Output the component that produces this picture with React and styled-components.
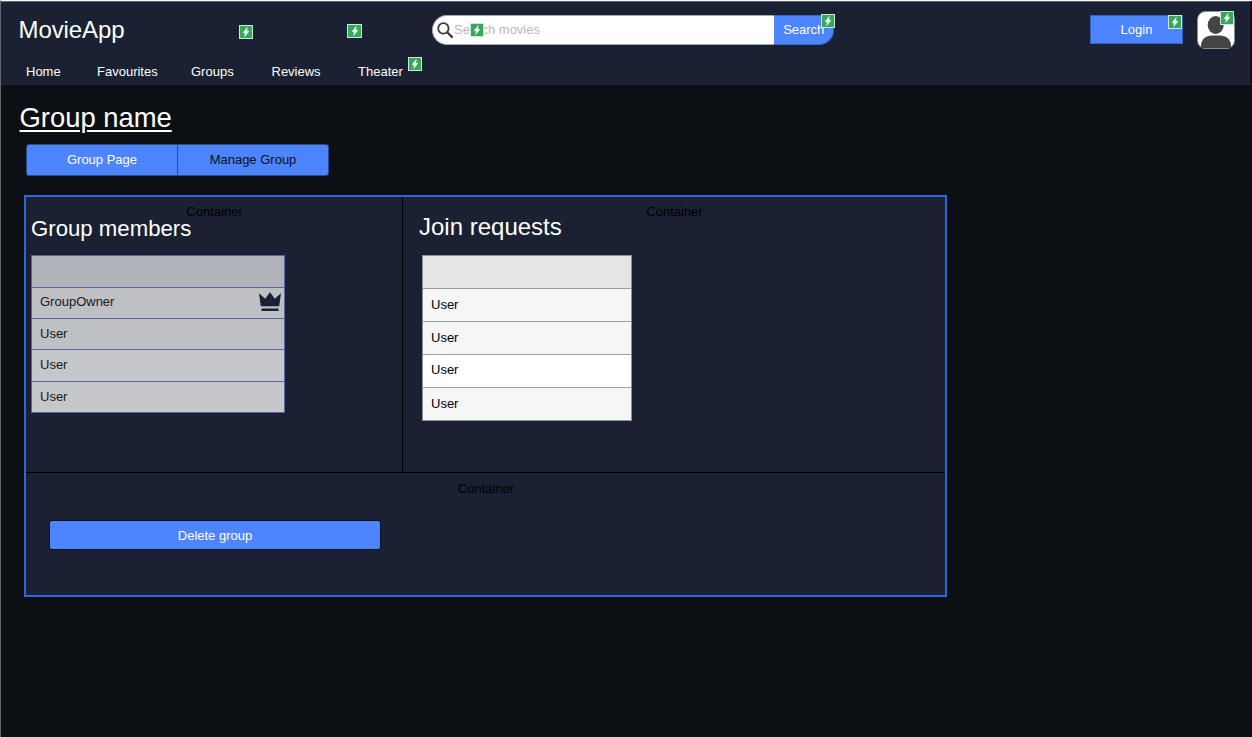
import React from "react";
import styled, { createGlobalStyle } from "styled-components";

const Global = createGlobalStyle`
  *, *::before, *::after { box-sizing: border-box; }
  html, body { margin: 0; background: #0c0f13; }
  body { font-family: "Liberation Sans", Arial, sans-serif; font-size: 13px; line-height: 15px; color: #fff; overflow: hidden; }
  button { font: inherit; padding: 0; margin: 0; }
  h1, h2, p { margin: 0; font-weight: 400; }
`;

const Page = styled.div`
  height: 737px;
  border-top: 1px solid #f4f6f7;
  border-left: 1px solid #63676b;
`;

const Header = styled.header`
  width: 1249px;
  height: 84px;
  border-top: 1px solid #626a76;
  background: #192132;
`;

const TopBar = styled.div`
  display: flex;
  align-items: flex-start;
  height: 60px;
`;

const Brand = styled.div`
  width: 431px;
  padding: 14px 0 0 17.5px;
  font-size: 24px;
  line-height: 28px;
  letter-spacing: -0.1px;
  position: relative;
`;

const BadgeBox = styled.span`
  position: absolute;
  left: ${(p) => p.$x}px;
  top: ${(p) => p.$y}px;
  width: ${(p) => p.$w || 14}px;
  height: ${(p) => p.$h || 14}px;
  border: 1px solid rgba(255, 255, 255, 0.75);
  background: #35a85a;
  display: flex;
  align-items: center;
  justify-content: center;
`;

const Badge = ({ x, y, w, h }) => (
  <BadgeBox $x={x} $y={y} $w={w} $h={h}>
    <svg width="8" height="10" viewBox="0 0 8 10">
      <path d="M5.2 0.4 1 5.8H3.2L2.7 9.6 7 4.2H4.8Z" fill="#fff" stroke="#fff" strokeWidth=".4" />
    </svg>
  </BadgeBox>
);

const SearchForm = styled.div`
  position: relative;
  display: flex;
  width: 402px;
  height: 29.5px;
  margin-top: 13px;
`;

const SearchField = styled.div`
  display: flex;
  align-items: center;
  width: 341.5px;
  border: 1px solid #a9abae;
  border-right: 0;
  border-radius: 15px 0 0 15px;
  background: #fff;
  color: #b9b9b9;
  padding: 0 0 0.5px 4px;
  svg { margin: 1px 0 0; }
`;

const SearchButton = styled.button`
  width: 60.5px;
  padding: 0 0 0.5px 1px;
  border: 1px solid #3b68c6;
  border-left: 0;
  border-radius: 0 15px 15px 0;
  background: #4d84ff;
  color: #fff;
`;

const LoginButton = styled.button`
  position: relative;
  width: 93px;
  height: 29px;
  margin: 13px 0 0 256px;
  border: 1px solid #3560b8;
  background: #4d84ff;
  color: #fff;
`;

const Avatar = styled.div`
  position: relative;
  width: 38px;
  height: 38px;
  margin: 9px 0 0 14px;
  svg { display: block; }
`;

const Nav = styled.nav`
  position: relative;
  display: flex;
  padding: 2px 0 0 25px;
`;

const NavItem = styled.a`
  width: ${(p) => p.$w}px;
`;

const Title = styled.h1`
  margin: 17px 0 0 18.5px;
  font-size: 27.4px;
  line-height: 32px;
  text-decoration: underline;
  text-decoration-thickness: 2px;
  text-underline-offset: 3px;
`;

const Tabs = styled.div`
  display: flex;
  width: 303px;
  height: 32px;
  margin: 9.5px 0 0 25px;
  border: 1px solid #2b4988;
  border-radius: 3px;
  background: #4d84ff;
  overflow: hidden;
`;

const Tab = styled.button`
  flex: 1;
  border: 0;
  background: none;
  color: ${(p) => (p.$active ? "#fff" : "#0c0f13")};
  & + & { border-left: 1px solid #2f4b87; }
`;

const Panel = styled.main`
  width: 923px;
  height: 402px;
  margin: 19.5px 0 0 23px;
  border: 2px solid #2b66dc;
  background: #192132;
`;

const Columns = styled.div`
  display: grid;
  grid-template-columns: 377px 1fr;
  height: 276px;
  border-bottom: 1px solid #000;
`;

const Column = styled.section`
  padding-left: ${(p) => p.$inset}px;
  position: relative;
  border-right: ${(p) => (p.$divided ? "1px solid #000" : "0")};
`;

const Footer = styled.section`
  position: relative;
  padding: 47px 0 0 23px;
`;

const Caption = styled.p`
  position: absolute;
  left: 1px;
  right: 0;
  top: ${(p) => p.$top || 7}px;
  text-align: center;
  color: #000;
`;

const Heading = styled.h2`
  position: relative;
  margin-left: ${(p) => p.$shift || 0}px;
  padding-top: ${(p) => p.$top}px;
  font-size: ${(p) => p.$size}px;
  line-height: 26px;
`;

const Table = styled.ul`
  list-style: none;
  margin: ${(p) => p.$gap}px 0 0;
  padding: 0;
  width: ${(p) => p.$w}px;
  border: 1px solid ${(p) => p.$line};
  color: ${(p) => p.$ink};
`;

const Row = styled.li`
  display: flex;
  align-items: center;
  justify-content: space-between;
  height: ${(p) => p.$h}px;
  padding: 0 3px ${(p) => p.$lift || 0}px 8px;
  background: ${(p) => p.$bg};
  border-top: 1px solid ${(p) => p.$line};
  &:first-child { border-top: 0; }
`;

const DeleteButton = styled.button`
  display: block;
  width: 332px;
  height: 30px;
  border: 1px solid #0c1222;
  border-radius: 3px;
  background: #4d84ff;
  color: #fff;
`;

const Crown = () => (
  <svg width="22" height="20" viewBox="0 0 22 20" fill="#192132">
    <path d="M0 1.2 6.2 6.8 11 .2 15.8 6.8 22 1.2 20.2 14.2H1.8Z" />
    <rect x="2.3" y="16.6" width="17.4" height="2.4" rx="1" />
  </svg>
);

const members = [
  { h: 31, bg: "#b2b3b8" },
  { name: "GroupOwner", h: 31, bg: "#bfc0c4", owner: true, lift: 3 },
  { name: "User", h: 31, bg: "#bfc0c4", lift: 1 },
  { name: "User", h: 32, bg: "#c6c7cb", lift: 2 },
  { name: "User", h: 31, bg: "#c6c7cb", lift: 1 },
];

const requests = [
  { h: 32, bg: "#e5e5e5" },
  { name: "User", h: 33, bg: "#f6f6f6", lift: 2 },
  { name: "User", h: 33, bg: "#f6f6f6", lift: 1 },
  { name: "User", h: 33, bg: "#ffffff", lift: 3 },
  { name: "User", h: 33, bg: "#f6f6f6", lift: 1 },
];

const Rows = ({ items, line }) =>
  items.map((item, i) => (
    <Row key={i} $h={item.h} $bg={item.bg} $lift={item.lift} $line={line}>
      <span>{item.name}</span>
      {item.owner && <Crown />}
    </Row>
  ));

export default function App() {
  return (
    <Page>
      <Global />
      <Header>
        <TopBar>
          <Brand>
            MovieApp
            <Badge x={238} y={23} />
            <Badge x={346} y={22} w={15} />
          </Brand>
          <SearchForm>
            <SearchField>
              <svg width="17" height="17" viewBox="0 0 17 17" fill="none" stroke="#3c3c3c">
                <circle cx="6.4" cy="6.4" r="5.2" strokeWidth="1.8" />
                <path d="M10.2 10.2 15.6 15.6" strokeWidth="2.2" />
              </svg>
              Search movies
            </SearchField>
            <SearchButton>Search</SearchButton>
            <Badge x={38} y={8} />
            <Badge x={388.6} y={-1} />
          </SearchForm>
          <LoginButton>
            Login
            <Badge x={77} y={-1} />
          </LoginButton>
          <Avatar>
            <svg width="38" height="38" viewBox="0 0 38 38">
              <rect x=".5" y=".5" width="37" height="37" rx="8" fill="#fff" stroke="#8b8d90" />
              <ellipse cx="18.7" cy="14" rx="8" ry="9" fill="#444" />
              <path d="M4 37V35C4 28 9 24.5 15 24.5H23C29 24.5 34 28 34 35V37Z" fill="#444" />
            </svg>
            <Badge x={23} y={0} />
          </Avatar>
        </TopBar>
        <Nav>
          <NavItem $w={71}>Home</NavItem>
          <NavItem $w={94}>Favourites</NavItem>
          <NavItem $w={80.5}>Groups</NavItem>
          <NavItem $w={86.5}>Reviews</NavItem>
          <NavItem $w={60}>Theater</NavItem>
          <Badge x={407} y={-5} />
        </Nav>
      </Header>
      <Title>Group name</Title>
      <Tabs>
        <Tab $active>Group Page</Tab>
        <Tab>Manage Group</Tab>
      </Tabs>
      <Panel>
        <Columns>
          <Column $inset={5} $divided>
            <Caption>Container</Caption>
            <Heading $top={19} $size={22.2}>Group members</Heading>
            <Table $gap={13} $w={254} $line="#5c63a0" $ink="#15181e">
              <Rows items={members} line="#5c63a0" />
            </Table>
          </Column>
          <Column $inset={19}>
            <Caption>Container</Caption>
            <Heading $top={17} $size={24} $shift={-3}>Join requests</Heading>
            <Table $gap={15} $w={210} $line="#8d9096" $ink="#000">
              <Rows items={requests} line="#9b9da1" />
            </Table>
          </Column>
        </Columns>
        <Footer>
          <Caption $top={8}>Container</Caption>
          <DeleteButton>Delete group</DeleteButton>
        </Footer>
      </Panel>
    </Page>
  );
}
